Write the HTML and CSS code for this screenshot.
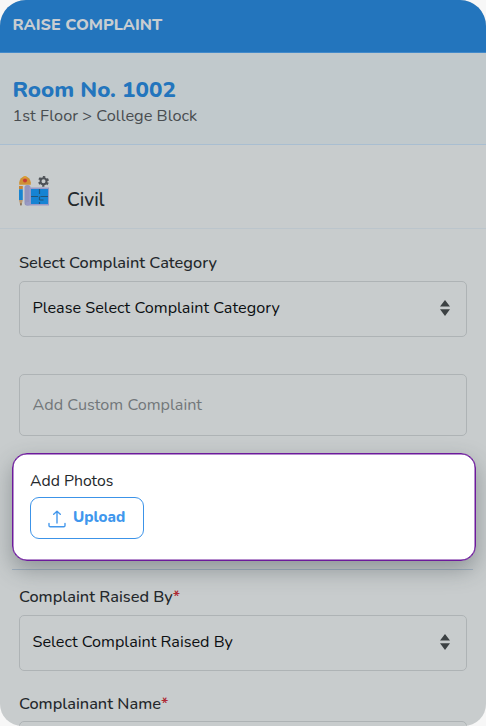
FILE: index.html
```html
<!DOCTYPE html>
<html lang="en">
<head>
<meta charset="utf-8">
<title>Raise Complaint</title>
<link rel="stylesheet" href="styles.css">
</head>
<body>
<main class="screen">
  <header class="topbar"><span class="topbar-title">RAISE COMPLAINT</span></header>
  <section class="room">
    <div class="room-name"><span>Room No. 1002</span></div>
    <div class="room-path"><span>1st Floor &gt; College Block</span></div>
  </section>
  <section class="type">
    <svg class="type-icon" width="32" height="32" viewBox="0 0 32 32">
      <path d="M1.200 9.800V7.500Q2 2 7 1.200Q12 2 12.800 7.500V9.800Z" fill="#cf9134"/>
      <path d="M5.600 1h2.800v4H5.600z" fill="#dda039"/>
      <circle cx="7" cy="5.600" r="2" fill="#c63c35"/>
      <path d="M1 11h3.800v3H1z" fill="#c78432"/>
      <path d="M1 14.300h3.800V25H1z" fill="#1984d0"/>
      <path d="M1 25h3.800L3.400 30.500H2.400Z" fill="#bd9a70"/>
      <path d="M2.200 28.500h1.500L3 31Z" fill="#4b4545"/>
      <rect x="6.500" y="10" width="6" height="20.500" rx="2.500" fill="#9294bd"/>
      <path d="M11 12.500h20v18H8.500a3 3 0 0 1 0-3.500H11Z" fill="#9799c5"/>
      <path d="M13 14h17v15H13z" fill="#1683d3"/>
      <path d="M13 21.500h7M22.500 21.500H30M21.500 14v5M21.500 21.500v3.500M21.500 25h4M21.500 27v2" fill="none" stroke="#235576" stroke-width="1.200"/>
      <circle cx="25.500" cy="6.300" r="3" fill="none" stroke="#4e5257" stroke-width="2"/>
      <circle cx="25.500" cy="6.300" r="4.500" fill="none" stroke="#4e5257" stroke-width="1.800" stroke-dasharray="2.300 2.412" stroke-dashoffset="-1.200"/>
    </svg>
    <span class="type-name">Civil</span>
  </section>
  <form class="form">
    <div class="label category-label"><span>Select Complaint Category</span></div>
    <div class="select">
      <span>Please Select Complaint Category</span>
      <svg class="arrows" width="10" height="16" viewBox="0 0 10 16"><path d="M5 0 10 6.500H0ZM0 9.200H10L5 16Z" fill="#3c4143"/></svg>
    </div>
    <div class="custom"><span>Add Custom Complaint</span></div>
    <div class="photos">
      <div class="photos-title"><span>Add Photos</span></div>
      <div class="upload">
        <svg width="18" height="18" viewBox="0 0 18 18" fill="none" stroke="#4498ec" stroke-width="1.400" stroke-linecap="round" stroke-linejoin="round"><path d="M9 13V1.300M5.700 4.300 9 1.300l3.300 3M1 13.500v2a1.200 1.200 0 0 0 1.200 1.200h13.600a1.200 1.200 0 0 0 1.200-1.200v-2"/></svg>
        <span>Upload</span>
      </div>
    </div>
    <div class="divider"></div>
    <div class="label raised-label"><span>Complaint Raised By</span><b>*</b></div>
    <div class="select">
      <span>Select Complaint Raised By</span>
      <svg class="arrows" width="10" height="16" viewBox="0 0 10 16"><path d="M5 0 10 6.500H0ZM0 9.200H10L5 16Z" fill="#3c4143"/></svg>
    </div>
    <div class="label name-label"><span>Complainant Name</span><b>*</b></div>
    <div class="select"></div>
  </form>
</main>
</body>
</html>
```
FILE: styles.css
```css
* { box-sizing: border-box; }
body {
  margin: 0;
  background: #f7f7f7;
  font-family: Nunito, Lato, sans-serif;
  font-size: 16px;
  color: #24282b;
}
span { white-space: nowrap; }
.screen {
  width: 486px;
  height: 726px;
  overflow: hidden;
  border-radius: 26px 26px 22px 22px;
  background: #c8cccd;
}
.topbar {
  height: 53px;
  padding: 14px 12.5px 0;
  background: #2375bd;
  border-bottom: 1px solid #438aca;
  color: #c8cdd1;
  font-weight: 800;
  font-size: 16.200px;
  line-height: 22px;
}
.room {
  height: 92px;
  padding: 23px 12.5px 0;
  background: #c1c9cc;
  border-bottom: 1px solid #a9bed1;
}
.room-name {
  color: #2375bd;
  font-weight: 800;
  font-size: 22.400px;
  line-height: 28px;
}
.room-path {
  margin-top: 1px;
  color: #494d50;
  line-height: 22px;
  font-size: 16.350px;
}
.type {
  height: 84px;
  display: flex;
  padding: 30px 18px 0;
  gap: 17px;
  border-bottom: 1px solid #bbc5cc;
}
.type-icon { flex: none; }
.type-name {
  padding-top: 12px;
  font-size: 19px;
  line-height: 26px;
  font-weight: 500;
}
.form { padding: 23px 19px 0; }
.label {
  display: flex;
  height: 22px;
  line-height: 22px;
  font-size: 16.350px;
  font-weight: 500;
}
.label b {
  color: #af2933;
  font-weight: 600;
}
.select, .custom {
  display: flex;
  align-items: center;
  justify-content: space-between;
  height: 56px;
  padding: 0 16px 2px 12.5px;
  border: 1px solid #aeb3b5;
  border-radius: 5px;
  color: #0c0f12;
  font-size: 16.2px;
}
.category-label, .raised-label { margin-bottom: 7px; }
.custom {
  height: 62px;
  margin-top: 37px;
  padding-bottom: 0;
  color: #72777a;
}
.photos {
  position: relative;
  height: 108px;
  margin: 17px -9px 0 -7px;
  padding: 16px 17px 0;
  border: 1px solid #6c1a9b;
  border-radius: 15px;
  background: #fff;
  box-shadow: inset 0 0 0 0.5px #6c1a9b, 0 9px 22px rgba(50, 60, 65, 0.38);
}
.photos-title {
  line-height: 22px;
  font-size: 15.800px;
}
.upload {
  display: flex;
  align-items: center;
  gap: 7px;
  width: 114px;
  height: 42px;
  margin-top: 5px;
  padding: 0 0 2px 17px;
  border: 1px solid #3c93e8;
  border-radius: 9px;
  color: #3f97ed;
  font-weight: 800;
  font-size: 15.200px;
}
.upload svg { margin-top: 3px; flex: none; }
.divider {
  height: 1px;
  margin: 8px -6px 16px -7px;
  background: #a1b1c0;
}
.name-label { margin: 22px 0 6px; }
```
